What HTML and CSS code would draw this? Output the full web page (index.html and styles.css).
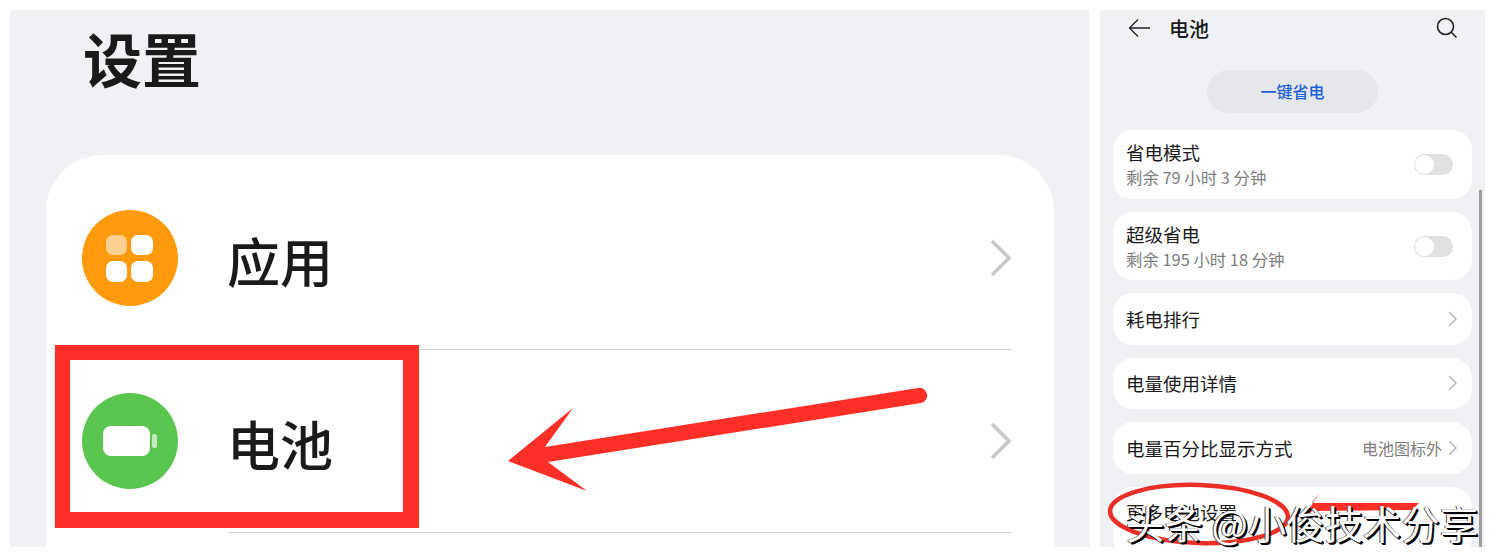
FILE: index.html
```html
<!DOCTYPE html>
<html lang="zh-CN">
<head>
    <meta charset="UTF-8">
    <meta name="viewport" content="width=device-width, initial-scale=1.0">
    <title>设置 电池</title>
    <link rel="stylesheet" href="styles.css">
</head>
<body>
    <div class="screens">
        <!-- left: settings list -->
        <div class="settings">
            <h1 class="settings-title">设置</h1>
            <div class="settings-card">
                <div class="settings-row">
                    <svg class="row-icon" viewBox="0 0 96 96">
                        <circle cx="48" cy="48" r="48" fill="#ff9a0c"/>
                        <rect x="24" y="25" width="21" height="20" rx="7" fill="#fcd093"/>
                        <rect x="49" y="25" width="22" height="20" rx="7" fill="#fff"/>
                        <rect x="24" y="51" width="21" height="21" rx="7" fill="#fff"/>
                        <rect x="49" y="51" width="22" height="21" rx="7" fill="#fff"/>
                    </svg>
                    <div class="row-body">
                        <span class="row-label">应用</span>
                        <svg class="row-chevron" viewBox="0 0 22 38"><path d="M2 2 L19 19 L2 36"/></svg>
                    </div>
                </div>
                <div class="settings-row">
                    <svg class="row-icon" viewBox="0 0 96 96">
                        <circle cx="48" cy="48" r="48" fill="#5ac54f"/>
                        <rect x="21" y="33" width="47" height="30" rx="8" fill="#fff"/>
                        <rect x="70" y="41" width="5" height="14" rx="2" fill="#c4eabf"/>
                    </svg>
                    <div class="row-body">
                        <span class="row-label">电池</span>
                        <svg class="row-chevron" viewBox="0 0 22 38"><path d="M2 2 L19 19 L2 36"/></svg>
                    </div>
                </div>
            </div>
        </div>

        <!-- right: battery page -->
        <div class="battery">
            <div class="battery-bar">
                <svg class="bar-back" viewBox="0 0 24 20"><path d="M22 10 H2 M10 1.500 L1.500 10 L10 18.500"/></svg>
                <span class="bar-title">电池</span>
                <svg class="bar-search" viewBox="0 0 22 22"><circle cx="9.500" cy="9.500" r="8"/><path d="M15.500 15.500 L20.500 20.500"/></svg>
            </div>
            <div class="saver-btn">一键省电</div>

            <div class="item item-tall">
                <div class="item-text">
                    <div class="item-label">省电模式</div>
                    <div class="item-sub">剩余 79 小时 3 分钟</div>
                </div>
                <span class="toggle"><span class="toggle-knob"></span></span>
            </div>
            <div class="item item-tall">
                <div class="item-text">
                    <div class="item-label">超级省电</div>
                    <div class="item-sub">剩余 195 小时 18 分钟</div>
                </div>
                <span class="toggle"><span class="toggle-knob"></span></span>
            </div>
            <div class="item">
                <div class="item-label">耗电排行</div>
                <svg class="item-chevron" viewBox="0 0 9 16"><path d="M1 1 L8 8 L1 15"/></svg>
            </div>
            <div class="item">
                <div class="item-label">电量使用详情</div>
                <svg class="item-chevron" viewBox="0 0 9 16"><path d="M1 1 L8 8 L1 15"/></svg>
            </div>
            <div class="item">
                <div class="item-label">电量百分比显示方式</div>
                <span class="item-value">电池图标外</span>
                <svg class="item-chevron" viewBox="0 0 9 16"><path d="M1 1 L8 8 L1 15"/></svg>
            </div>
            <div class="item item-last">
                <div class="item-label">更多电池设置</div>
            </div>
            <div class="scrollbar"></div>
        </div>
    </div>

    <!-- annotations drawn over the screenshot -->
    <div class="mark-box"></div>
    <svg class="marks" viewBox="0 0 1495 558">
        <path class="mark-fill" d="M508 461 L573 408 L545 447 L918 388 A7.500 7.500 0 0 1 921 403 L548 462 L587 491 Z"/>
        <ellipse class="mark-ring" cx="1199" cy="514" rx="89" ry="29" transform="rotate(2 1199 514)"/>
        <path class="mark-fill" d="M1296 530 L1320 492 L1312 503 L1419 503 L1412 510 L1312 511 Z"/>
    </svg>
    <div class="watermark">头条 @小俊技术分享</div>
</body>
</html>
```

FILE: styles.css
```css
* {
    box-sizing: border-box;
}
body {
    margin: 0;
    background: white;
    font-family: "Noto Sans CJK SC", "Noto Sans", sans-serif;
    color: #1a1a1a;
    overflow: hidden;
}
.screens {
    display: flex;
    gap: 11px;
    height: 558px;
    padding: 10px 10px 11px 10px;
}

/* left panel */
.settings {
    width: 1079px;
    background: #eff1f5;
    overflow: hidden;
}
.settings-title {
    height: 145px;
    margin: 0;
    padding-left: 73px;
    font-size: 59px;
    font-weight: 700;
    line-height: 96px;
}
.settings-card {
    height: 420px;
    margin: 0 35px 0 36px;
    padding-top: 12px;
    background: white;
    border-radius: 56px 56px 0 0;
}
.settings-row {
    display: flex;
    align-items: center;
    height: 183px;
    padding: 0 42px 0 36px;
}
.row-icon {
    flex: none;
    width: 96px;
    height: 96px;
    margin-top: -1px;
}
.row-body {
    flex: 1;
    display: flex;
    align-items: center;
    justify-content: space-between;
    height: 100%;
    margin-left: 50px;
    border-bottom: 1px solid #d0d0d0;
}
.row-label {
    margin-left: -1px;
    font-size: 53px;
    font-weight: 500;
    line-height: 60px;
    padding-top: 4px;
}
.row-chevron {
    width: 22px;
    height: 38px;
    fill: none;
    stroke: #c8c8c8;
    stroke-width: 3.500;
}

/* right panel */
.battery {
    position: relative;
    width: 385px;
    padding: 0 13px 0 13px;
    background: #eff1f5;
    overflow: hidden;
}
.battery-bar {
    display: flex;
    align-items: center;
    height: 36px;
    padding: 0 15px;
}
.bar-back {
    width: 24px;
    height: 20px;
    fill: none;
    stroke: #222;
    stroke-width: 1.300;
}
.bar-title {
    margin-left: 17px;
    font-size: 20px;
    font-weight: 500;
}
.bar-search {
    width: 22px;
    height: 22px;
    margin-left: auto;
    margin-right: -1px;
    fill: none;
    stroke: #222;
    stroke-width: 1.600;
}
.saver-btn {
    width: 171px;
    height: 43px;
    margin: 24px auto 17px;
    background: #e5e7eb;
    border-radius: 22px;
    color: #1a60d8;
    font-size: 16px;
    font-weight: 500;
    line-height: 43px;
    text-align: center;
}
.item {
    display: flex;
    align-items: center;
    width: 359px;
    height: 51.500px;
    margin-bottom: 13px;
    padding: 0 15px 0 13px;
    background: white;
    border-radius: 20px;
}
.item-tall {
    height: 69px;
    justify-content: space-between;
}
.item-tall + .item-tall {
    height: 68px;
}
.item-last {
    height: 70px;
    margin: 0;
    align-items: flex-start;
    padding-top: 13px;
}
.item-label {
    font-size: 18.500px;
    line-height: 24px;
}
.item-sub {
    margin-top: 1px;
    color: #7d7d7d;
    font-size: 16.400px;
    line-height: 24px;
}
.item-value {
    margin-left: auto;
    margin-right: 6px;
    color: #7d7d7d;
    font-size: 16px;
}
.item-chevron {
    width: 9px;
    height: 16px;
    margin-left: auto;
    fill: none;
    stroke: #b4b4b4;
    stroke-width: 1.400;
}
.item-value + .item-chevron {
    margin-left: 0;
}
.toggle {
    width: 39px;
    height: 21px;
    margin-right: 4px;
    padding: 1px;
    background: #e1e1e1;
    border-radius: 11px;
}
.toggle-knob {
    display: block;
    width: 19px;
    height: 19px;
    background: white;
    border-radius: 50%;
}
.scrollbar {
    position: absolute;
    top: 180px;
    right: 3px;
    bottom: 0;
    width: 3px;
    background: #9c9c9c;
}

/* annotations */
.mark-box {
    position: absolute;
    left: 55px;
    top: 345px;
    width: 364px;
    height: 183px;
    border: solid #fe2f27;
    border-width: 15px 16px 16px 15px;
}
.marks {
    position: absolute;
    left: 0;
    top: 0;
    width: 1495px;
    height: 558px;
}
.mark-fill {
    fill: #fe2f27;
}
.mark-ring {
    fill: none;
    stroke: #ea2f27;
    stroke-width: 4.500;
}
.watermark {
    position: absolute;
    left: 1126px;
    top: 496px;
    font-size: 38.400px;
    line-height: 52px;
    white-space: nowrap;
    color: white;
    text-shadow: 1px 1px 0 #000, 2px 2px 0 #000, -1px 0 0 #444;
}
```
